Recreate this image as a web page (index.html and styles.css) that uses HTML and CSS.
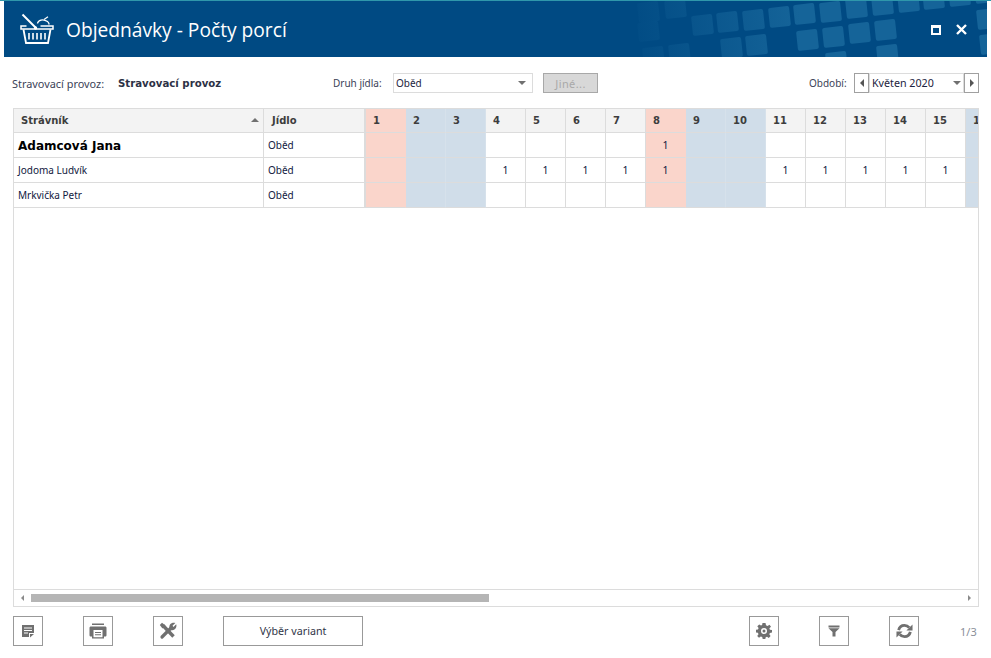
FILE: index.html
```html
<!DOCTYPE html>
<html lang="cs">
  <head>
    <meta charset="UTF-8" />
    <title>Objednávky - Počty porcí</title>
    <link rel="stylesheet" href="styles.css">
  </head>
  <body>
    <header class="title-bar">
      <!-- pozadí hlavičky -->
      <svg class="title-pattern" width="983" height="56" viewBox="4 1 983 56">
        <defs>
          <linearGradient id="fade" gradientUnits="userSpaceOnUse" x1="620" y1="0" x2="800" y2="0">
            <stop offset="0" stop-color="#156499" stop-opacity="0" />
            <stop offset="1" stop-color="#156499" />
          </linearGradient>
        </defs>
        <g fill="url(#fade)">
          <rect x="638" y="2" width="21" height="20" rx="2" transform="rotate(-6 648 12)" />
          <rect x="665" y="0" width="21" height="18" rx="2" transform="rotate(-6 675 9)" />
          <rect x="692" y="15" width="21" height="20" rx="2" transform="rotate(-6 702 25)" />
          <rect x="717" y="12" width="21" height="20" rx="2" transform="rotate(-6 727 22)" />
          <rect x="743" y="10" width="21" height="20" rx="2" transform="rotate(-6 753 20)" />
          <rect x="769" y="7" width="21" height="20" rx="2" transform="rotate(-6 779 17)" />
          <rect x="794" y="4" width="21" height="20" rx="2" transform="rotate(-6 804 14)" />
          <rect x="820" y="2" width="21" height="20" rx="2" transform="rotate(-6 830 12)" />
          <rect x="846" y="-2" width="21" height="20" rx="2" transform="rotate(-6 856 8)" />
          <rect x="872" y="-5" width="21" height="20" rx="2" transform="rotate(-6 882 5)" />
          <rect x="898" y="-8" width="21" height="20" rx="2" transform="rotate(-6 908 2)" />
          <rect x="923" y="-11" width="21" height="20" rx="2" transform="rotate(-6 933 -1)" />
          <rect x="949" y="-14" width="21" height="20" rx="2" transform="rotate(-6 959 -4)" />
          <rect x="975" y="-17" width="21" height="20" rx="2" transform="rotate(-6 985 -7)" />
          <rect x="638" y="22" width="21" height="19" rx="2" transform="rotate(-6 648 31)" />
          <rect x="643" y="47" width="21" height="20" rx="2" transform="rotate(-6 653 57)" />
          <rect x="669" y="44" width="21" height="20" rx="2" transform="rotate(-6 679 54)" />
          <rect x="721" y="38" width="21" height="20" rx="2" transform="rotate(-6 731 48)" />
          <rect x="746" y="35" width="21" height="20" rx="2" transform="rotate(-6 756 45)" />
          <rect x="797" y="30" width="21" height="20" rx="2" transform="rotate(-6 807 40)" />
          <rect x="823" y="27" width="21" height="20" rx="2" transform="rotate(-6 833 37)" />
          <rect x="849" y="23" width="21" height="20" rx="2" transform="rotate(-6 859 33)" />
          <rect x="875" y="20" width="21" height="20" rx="2" transform="rotate(-6 885 30)" />
          <rect x="826" y="52" width="21" height="20" rx="2" transform="rotate(-6 836 62)" />
          <rect x="877" y="45" width="21" height="20" rx="2" transform="rotate(-6 887 55)" />
          <rect x="977" y="9" width="21" height="20" rx="2" transform="rotate(-6 987 19)" />
          <rect x="980" y="34" width="21" height="20" rx="2" transform="rotate(-6 990 44)" />
        </g>
      </svg>
      <svg class="basket-icon" width="34" height="32" viewBox="0 0 34 32" fill="none" stroke="#fff">
        <path d="M2.500 1.500 L15.500 14.500" stroke-width="2" />
        <circle cx="15.500" cy="15" r="1.700" fill="#fff" stroke="none" />
        <path d="M17.500 10.500 C18 7 23 5.500 27.500 8.500 C28.500 9.200 29 10.500 29.200 11.500" stroke-width="1.300" />
        <path d="M24 6.500 L28 3.800" stroke-width="1.200" />
        <path d="M6.500 13 H1 V16 H33 V13 H20.500" stroke-width="1.500" />
        <path d="M3.500 16.500 L6 30 H28 L30.500 16.500" stroke-width="1.800" />
        <path d="M9 20 V26.500 M13 20 V26.500 M17 20 V26.500 M21 20 V26.500 M25 20 V26.500" stroke-width="1.600" />
      </svg>
      <h1 class="title-text">Objednávky - Počty porcí</h1>
      <div class="window-btns">
        <svg width="10" height="10" viewBox="0 0 10 10"><path fill="#fff" fill-rule="evenodd" d="M0 0H10V10H0Z M2 3V8H8V3Z" /></svg>
        <svg width="11" height="11" viewBox="0 0 11 11"><path stroke="#fff" stroke-width="2.400" d="M1 1L10 10M10 1L1 10" /></svg>
      </div>
    </header>

    <div class="filter-bar">
      <span class="label label-provoz">Stravovací provoz:</span>
      <span class="provoz-name">Stravovací provoz</span>
      <span class="label label-druh">Druh jídla:</span>
      <div class="select select-druh"><span>Oběd</span><i class="caret"></i></div>
      <button class="other-btn" type="button">Jiné...</button>
      <span class="label label-obdobi">Období:</span>
      <button class="step-btn" type="button"><i class="arrow-left"></i></button>
      <div class="select select-month"><span>Květen 2020</span><i class="caret"></i></div>
      <button class="step-btn" type="button"><i class="arrow-right"></i></button>
    </div>

    <div class="grid-box">
      <div class="grid-scroll">
        <table class="grid">
          <colgroup>
            <col class="col-name" /><col class="col-food" />
            <col class="col-day" /><col class="col-day" /><col class="col-day" /><col class="col-day" />
            <col class="col-day" /><col class="col-day" /><col class="col-day" /><col class="col-day" />
            <col class="col-day" /><col class="col-day" /><col class="col-day" /><col class="col-day" />
            <col class="col-day" /><col class="col-day" /><col class="col-day" /><col class="col-day" />
          </colgroup>
          <thead>
            <tr>
              <th class="th-name">Strávník<i class="sort-up"></i></th>
              <th class="food">Jídlo</th>
              <th class="hol">1</th><th class="we">2</th><th class="we">3</th>
              <th>4</th><th>5</th><th>6</th><th>7</th>
              <th class="hol">8</th><th class="we">9</th><th class="we">10</th>
              <th>11</th><th>12</th><th>13</th><th>14</th><th>15</th>
              <th class="we">16</th>
            </tr>
          </thead>
          <tbody>
            <tr>
              <td class="name name-big">Adamcová Jana</td>
              <td class="food">Oběd</td>
              <td class="hol"></td><td class="we"></td><td class="we"></td>
              <td></td><td></td><td></td><td></td>
              <td class="hol">1</td><td class="we"></td><td class="we"></td>
              <td></td><td></td><td></td><td></td><td></td>
              <td class="we"></td>
            </tr>
            <tr>
              <td class="name">Jodoma Ludvík</td>
              <td class="food">Oběd</td>
              <td class="hol"></td><td class="we"></td><td class="we"></td>
              <td>1</td><td>1</td><td>1</td><td>1</td>
              <td class="hol">1</td><td class="we"></td><td class="we"></td>
              <td>1</td><td>1</td><td>1</td><td>1</td><td>1</td>
              <td class="we"></td>
            </tr>
            <tr>
              <td class="name">Mrkvička Petr</td>
              <td class="food">Oběd</td>
              <td class="hol"></td><td class="we"></td><td class="we"></td>
              <td></td><td></td><td></td><td></td>
              <td class="hol"></td><td class="we"></td><td class="we"></td>
              <td></td><td></td><td></td><td></td><td></td>
              <td class="we"></td>
            </tr>
          </tbody>
        </table>
      </div>
      <div class="scrollbar">
        <i class="scroll-left"></i>
        <div class="scroll-track"><div class="scroll-thumb"></div></div>
        <i class="scroll-right"></i>
      </div>
    </div>

    <footer class="bottom-bar">
      <button class="icon-btn" type="button">
        <svg width="14" height="14" viewBox="0 0 14 14"><path fill="#707070" fill-rule="evenodd" d="M1 1H13V9L8 9V13H1Z M3 3.500V4.500H11V3.500Z M3 6V7H11V6Z M3 8.500V9.500H7V8.500Z M9 10H13L9 13.500Z" /></svg>
      </button>
      <button class="icon-btn" type="button">
        <svg width="18" height="16" viewBox="0 0 18 16"><path fill="#707070" fill-rule="evenodd" d="M3 0.500H15V2H3Z M2 3.500H16C17 3.500 17.500 4 17.500 5V12C17.500 13 17 13.500 16 13.500H15V15.500H3V13.500H2C1 13.500 0.500 13 0.500 12V5C0.500 4 1 3.500 2 3.500Z M4.500 7V14.300H13.500V7Z M6 9V10H12V9Z M6 11.300V12.300H12V11.300Z" /></svg>
      </button>
      <button class="icon-btn" type="button">
        <svg width="18" height="18" viewBox="0 0 18 18" fill="none">
          <path stroke="#707070" stroke-width="3.200" stroke-linecap="round" d="M3 15L12 6" />
          <path stroke="#707070" stroke-width="3.400" d="M4 3.500L14.500 14.500" />
          <path fill="#707070" d="M0.800 3L3 0.800L6.500 3.500L3.500 6.500Z" />
          <path fill="#707070" d="M11 2.500C12.300 0.800 14.500 0.300 16.300 1L13.500 3.800L14.500 5L17.200 2.200C17.800 4 17.300 6 15.800 7.300C14.300 8.600 12.500 8.600 11 7.800C10.200 6 10.100 4 11 2.500Z" />
        </svg>
      </button>
      <button class="text-btn" type="button">Výběr variant</button>
      <div class="bottom-right">
        <button class="icon-btn" type="button">
          <svg width="16" height="16" viewBox="0 0 16 16"><path fill="#707070" fill-rule="evenodd" d="M6.500 0H9.500L10 2.200L11.500 2.900L13.500 1.700L15 3.800L13.400 5.300L13.900 6.800L16 7V9.500L13.900 9.900L13.300 11.300L14.600 13.100L12.800 15L11 13.700L9.700 14.200L9.300 16H6.700L6.200 14L4.800 13.500L3 14.800L1.200 13L2.500 11.200L1.900 9.800L0 9.400V6.800L2 6.400L2.600 5L1.300 3.200L3.200 1.400L5 2.600L6.100 2.100Z M8 5A3 3 0 1 0 8 11A3 3 0 1 0 8 5Z M8 6.500A1.500 1.500 0 1 1 8 9.500A1.500 1.500 0 1 1 8 6.500Z" /></svg>
        </button>
        <button class="icon-btn" type="button">
          <svg width="12" height="12" viewBox="0 0 12 12"><path fill="#707070" fill-rule="evenodd" d="M0.500 0.500H11.500V2.500H0.500Z M0.500 3.300H11.500L7.500 7V11.500L4.500 11.500V7Z" /></svg>
        </button>
        <button class="icon-btn" type="button">
          <svg width="17" height="16" viewBox="0 0 18 16" fill="none"><path stroke="#707070" stroke-width="3" d="M2.800 7C3.500 4 6 2 9 2C11 2 12.800 3 14 4.500 M15.200 9C14.500 12 12 14 9 14C7 14 5.200 13 4 11.500" /><path fill="#707070" d="M17.500 1V7.500H11Z M0.500 15V8.500H7Z" /></svg>
        </button>
        <span class="page-count">1/3</span>
      </div>
    </footer>
  </body>
</html>
```

FILE: styles.css
```css
html,
body {
  height: 100%;
}

body {
  margin: 0;
  padding: 0;
  display: flex;
  flex-direction: column;
  overflow: hidden;
  background-color: #fff;
  font-family: 'Noto Sans', 'Liberation Sans', sans-serif;
  font-size: 10px;
  color: #1c2340;
  border-top: 1px solid #2f97ab;
  box-sizing: border-box;
}

button {
  padding: 0;
  font-family: inherit;
  background-color: #fff;
  box-sizing: border-box;
}

/* title bar */
.title-bar {
  position: relative;
  flex: none;
  display: flex;
  align-items: center;
  height: 56px;
  margin: 0 4px;
  padding-left: 16px;
  overflow: hidden;
  background-color: #004a83;
}

.title-pattern {
  position: absolute;
  left: 0;
  top: 0;
}

.basket-icon {
  position: relative;
  margin-top: -1px;
}

.title-text {
  position: relative;
  margin: 0 0 0 12px;
  font-family: 'Open Sans', sans-serif;
  font-size: 19.200px;
  font-weight: 400;
  color: #fff;
}

.window-btns {
  position: absolute;
  right: 20px;
  top: 23px;
  display: flex;
  align-items: center;
  gap: 15px;
}

.window-btns svg {
  display: block;
}

/* filters */
.filter-bar {
  flex: none;
  display: flex;
  align-items: center;
  height: 20px;
  margin-top: 16px;
  padding-left: 12px;
}

.label {
  color: #3b4257;
  white-space: nowrap;
}

.label-provoz {
  width: 106px;
  font-size: 10.900px;
}

.provoz-name {
  width: 215px;
  font-family: 'DejaVu Sans', sans-serif;
  font-size: 10.200px;
  font-weight: 700;
  color: #2c3145;
}

.label-druh {
  width: 60px;
}

.select {
  display: flex;
  align-items: center;
  justify-content: space-between;
  height: 20px;
  padding: 0 6px 0 2px;
  border: 1px solid #dcdcdc;
  box-sizing: border-box;
  color: #1c2340;
}

.select-druh {
  width: 140px;
}

.select-month {
  width: 95px;
  padding-right: 2px;
  font-size: 10.700px;
}

.caret {
  width: 0;
  height: 0;
  border-left: 4px solid transparent;
  border-right: 4px solid transparent;
  border-top: 4px solid #707070;
}

.other-btn {
  width: 55px;
  height: 20px;
  margin-left: 10px;
  border: 1px solid #a8a8a8;
  background-color: #d8d8d8;
  font-size: 11px;
  letter-spacing: 0.400px;
  color: #a9a9a9;
}

.label-obdobi {
  width: 45px;
  margin-left: auto;
}

.step-btn {
  display: flex;
  align-items: center;
  justify-content: center;
  width: 15px;
  height: 20px;
  border: 1px solid #a0a0a0;
}

.filter-bar .step-btn:last-child {
  margin-right: 12px;
}

.arrow-left,
.arrow-right {
  width: 0;
  height: 0;
  border-top: 4px solid transparent;
  border-bottom: 4px solid transparent;
}

.arrow-left {
  border-right: 4px solid #555;
}

.arrow-right {
  border-left: 4px solid #555;
}

/* grid */
.grid-box {
  flex: 1;
  min-height: 0;
  display: flex;
  flex-direction: column;
  width: 966px;
  margin: 15px 0 0 13px;
  border: 1px solid #dcdcdc;
  box-sizing: border-box;
}

.grid-scroll {
  flex: 1;
  min-height: 0;
  overflow: hidden;
}

.grid {
  width: 992px;
  table-layout: fixed;
  border-collapse: separate;
  border-spacing: 0;
}

.col-name {
  width: 250px;
}

.col-food {
  width: 102px;
}

.col-day {
  width: 40px;
}

.grid th,
.grid td {
  padding: 0;
  border-right: 1px solid #dcdcdc;
  border-bottom: 1px solid #dcdcdc;
  white-space: nowrap;
  overflow: hidden;
}

.grid th {
  height: 23px;
  padding-left: 7px;
  background-color: #f3f3f3;
  font-family: 'DejaVu Sans', sans-serif;
  font-size: 10px;
  font-weight: 700;
  text-align: left;
  color: #3d3d3d;
}

.grid td {
  height: 23px;
  padding-bottom: 1px;
  font-size: 10.500px;
  text-align: center;
  color: #101840;
}

.th-name {
  position: relative;
}

.sort-up {
  position: absolute;
  right: 4px;
  top: 9px;
  width: 0;
  height: 0;
  border-left: 4px solid transparent;
  border-right: 4px solid transparent;
  border-bottom: 4px solid #707070;
}

.grid .name {
  padding-left: 4px;
  font-size: 10px;
  text-align: left;
}

.grid .name-big {
  height: 22px;
  padding-top: 2px;
  padding-bottom: 0;
  font-family: 'DejaVu Sans', sans-serif;
  font-size: 12px;
  font-weight: 700;
  color: #000;
}

.grid .food {
  border-right-width: 2px;
  padding-left: 4px;
  font-size: 10px;
  text-align: left;
}

.grid th.food {
  padding-left: 8px;
}

.grid .hol {
  background-color: #fad5cb;
  border-right-color: #fad5cb;
}

.grid .we {
  background-color: #d0dde9;
  border-right-color: #d6e1eb;
}

.scrollbar {
  flex: none;
  display: flex;
  align-items: center;
  height: 16px;
  border-top: 1px solid #dcdcdc;
}

.scroll-track {
  flex: 1;
  height: 8px;
  margin-left: 7px;
}

.scroll-thumb {
  width: 458px;
  height: 8px;
  background-color: #b5b5b5;
}

.scroll-left,
.scroll-right {
  width: 0;
  height: 0;
  border-top: 3px solid transparent;
  border-bottom: 3px solid transparent;
}

.scroll-left {
  margin-left: 7px;
  border-right: 3px solid #8a8a8a;
}

.scroll-right {
  margin-right: 7px;
  border-left: 3px solid #8a8a8a;
}

/* bottom toolbar */
.bottom-bar {
  flex: none;
  display: flex;
  align-items: center;
  gap: 40px;
  height: 30px;
  margin: 9px 0 12px;
  padding-left: 13px;
}

.icon-btn {
  display: flex;
  align-items: center;
  justify-content: center;
  width: 30px;
  height: 30px;
  border: 1px solid #999;
}

.text-btn {
  width: 140px;
  height: 30px;
  border: 1px solid #999;
  font-size: 10.700px;
  color: #2f3547;
}

.bottom-right {
  display: flex;
  align-items: center;
  gap: 40px;
  margin-left: 346px;
}

.page-count {
  margin-left: 1px;
  font-size: 11px;
  color: #8a8f99;
}
```
